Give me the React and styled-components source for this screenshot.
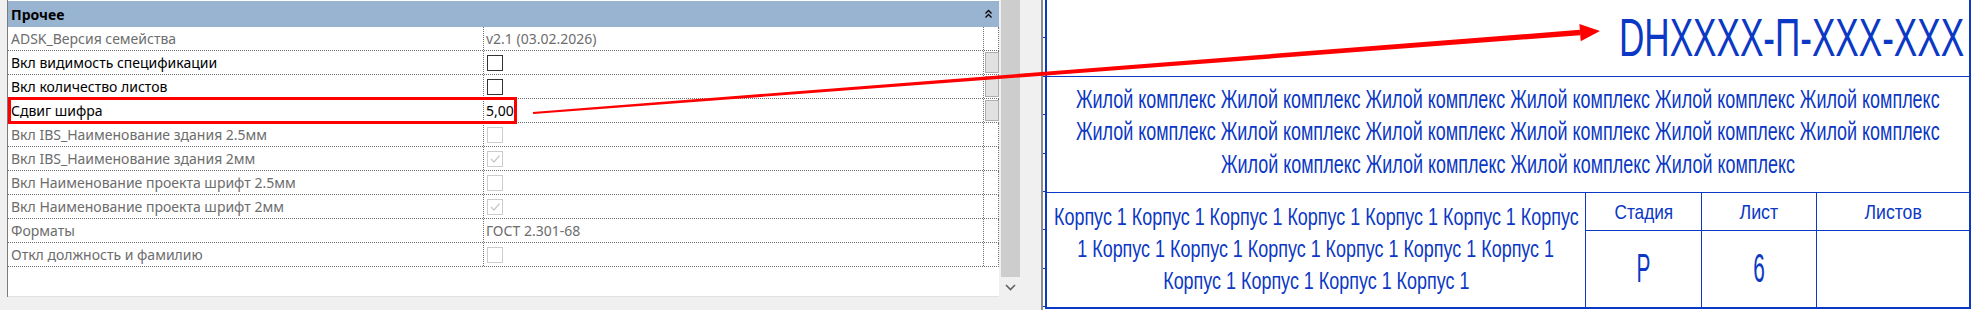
import React from 'react';
import styled, { createGlobalStyle } from 'styled-components';

const BLUE = '#0b38c4';
const DOT = '#6f6f6f';

const GlobalStyle = createGlobalStyle`
  html, body {
    margin: 0;
    padding: 0;
    background: #f0f0f0;
  }
  body {
    font-family: "Noto Sans", "Liberation Sans", sans-serif;
  }
`;

const Screen = styled.div`
  position: relative;
  width: 1971px;
  height: 310px;
  display: flex;
  overflow: hidden;
  background: #f0f0f0;
`;

/* ---------- property palette ---------- */

const PropertyPanel = styled.div`
  width: 1037px;
  flex: 0 0 1037px;
  display: flex;
  flex-direction: column;
`;

const PanelBody = styled.div`
  height: 297px;
  display: flex;
  margin-left: 7px;
  border-left: 1px solid #7c7c7c;
`;

const Grid = styled.div`
  position: relative;
  width: 991px;
  padding-top: 1px;
  background: #fff;
  box-sizing: border-box;
  border-bottom: 1px solid #e2e2e2;
`;

const GroupHeader = styled.div`
  height: 26px;
  display: flex;
  align-items: center;
  justify-content: space-between;
  padding: 0 6px 0 3px;
  background: #99b4d1;
  font-size: 14px;
  font-weight: 700;
  color: #000;
`;

const Row = styled.div`
  display: grid;
  grid-template-columns: 476px 500px 1fr;
  height: 24px;
  box-sizing: border-box;
  border-bottom: 1px dotted ${DOT};
  border-right: 1px dotted ${DOT};
  font-size: 14px;
  color: ${(p) => (p.$disabled ? '#6d6d6d' : '#000')};
`;

const LabelCell = styled.div`
  display: flex;
  align-items: center;
  padding-left: 3px;
  border-right: 1px dotted ${DOT};
  white-space: nowrap;
`;

const ValueCell = styled.div`
  display: flex;
  align-items: center;
  padding-left: 2px;
  border-right: 1px dotted ${DOT};
  white-space: nowrap;
`;

const ButtonCell = styled.div`
  padding: 1px 0 0 1px;
`;

const EditButton = styled.div`
  width: 12px;
  height: 19px;
  background: #e1e1e1;
  border: 1px solid #adadad;
`;

const CheckBox = styled.div`
  width: 14px;
  height: 14px;
  margin-left: 1px;
  border: 1px solid ${(p) => (p.$disabled ? '#cccccc' : '#333333')};
  background: #fff;
  display: flex;
  align-items: center;
  justify-content: center;
`;

const Highlight = styled.div`
  position: absolute;
  left: 0;
  top: 97px;
  width: 509px;
  height: 27px;
  box-sizing: border-box;
  border: 3px solid #ff0000;
  pointer-events: none;
`;

const ScrollBar = styled.div`
  width: 23px;
  display: flex;
  flex-direction: column;
  background: #f0f0f0;
`;

const Thumb = styled.div`
  height: 277px;
  margin: 0 2px;
  background: #cdcdcd;
`;

const ArrowBox = styled.div`
  flex: 1;
  display: flex;
  align-items: center;
  justify-content: center;
`;

const Gutter = styled.div`
  flex: 1;
`;

/* ---------- drawing view ---------- */

const DrawingView = styled.div`
  flex: 1;
  display: flex;
  background: #fff;
  border-left: 2px solid #8c8c8c;
`;

const TickColumn = styled.div`
  width: 2px;
  display: flex;
  flex-direction: column;
`;

const Tick = styled.div`
  flex: 0 0 38.4px;
  box-sizing: border-box;
  border-bottom: 1px solid ${BLUE};
`;

const Sheet = styled.div`
  width: 922px;
  height: 307px;
  display: flex;
  flex-direction: column;
  border-left: 2px solid ${BLUE};
  border-right: 2px solid ${BLUE};
  border-bottom: 2px solid ${BLUE};
`;

const CodeRow = styled.div`
  height: 77px;
  box-sizing: border-box;
  display: flex;
  align-items: center;
  padding: 0 0 3px 572px;
  overflow: hidden;
  border-bottom: 1px solid ${BLUE};
`;

const TitleRow = styled.div`
  height: 116px;
  box-sizing: border-box;
  display: flex;
  flex-direction: column;
  align-items: center;
  justify-content: center;
  padding-bottom: 6px;
  border-bottom: 1px solid ${BLUE};
`;

const StampRow = styled.div`
  flex: 1;
  display: grid;
  grid-template-columns: 538px 116px 115px 1fr;
  grid-template-rows: 38px 1fr;
`;

const StampCell = styled.div`
  display: flex;
  flex-direction: column;
  align-items: center;
  justify-content: center;
  border-left: ${(p) => (p.$first ? 'none' : `1px solid ${BLUE}`)};
  border-bottom: ${(p) => (p.$head ? `1px solid ${BLUE}` : 'none')};
  grid-row: ${(p) => p.$rows || 'auto'};
  padding-bottom: ${(p) => p.$lift || 0}px;
`;

const Narrow = styled.span`
  display: block;
  white-space: nowrap;
  font-family: "Liberation Sans", Arial, sans-serif;
  font-size: ${(p) => p.$size}px;
  line-height: ${(p) => p.$line || p.$size}px;
  transform: scaleX(${(p) => p.$scale});
  transform-origin: ${(p) => p.$origin || 'center'};
  color: ${BLUE};
`;

const Overlay = styled.svg`
  position: absolute;
  left: 0;
  top: 0;
  pointer-events: none;
`;

const rows = [
  { label: 'ADSK_Версия семейства', text: 'v2.1 (03.02.2026)', disabled: true },
  { label: 'Вкл видимость спецификации', check: false, button: true },
  { label: 'Вкл количество листов', check: false, button: true },
  { label: 'Сдвиг шифра', text: '5,00', button: true },
  { label: 'Вкл IBS_Наименование здания 2.5мм', check: false, disabled: true },
  { label: 'Вкл IBS_Наименование здания 2мм', check: true, disabled: true },
  { label: 'Вкл Наименование проекта шрифт 2.5мм', check: false, disabled: true },
  { label: 'Вкл Наименование проекта шрифт 2мм', check: true, disabled: true },
  { label: 'Форматы', text: 'ГОСТ 2.301-68', disabled: true },
  { label: 'Откл должность и фамилию', check: false, disabled: true },
];

const complexLines = [
  'Жилой комплекс Жилой комплекс Жилой комплекс Жилой комплекс Жилой комплекс Жилой комплекс',
  'Жилой комплекс Жилой комплекс Жилой комплекс Жилой комплекс Жилой комплекс Жилой комплекс',
  'Жилой комплекс Жилой комплекс Жилой комплекс Жилой комплекс',
];

const buildingLines = [
  'Корпус 1 Корпус 1 Корпус 1 Корпус 1 Корпус 1 Корпус 1 Корпус',
  '1 Корпус 1 Корпус 1 Корпус 1 Корпус 1 Корпус 1 Корпус 1',
  'Корпус 1 Корпус 1 Корпус 1 Корпус 1',
];

const CollapseIcon = () => (
  <svg width="9" height="10" viewBox="0 0 9 10">
    <polyline points="1.5,4.5 4.5,1.5 7.5,4.5" fill="none" stroke="#000" strokeWidth="1.3" />
    <polyline points="1.5,8.5 4.5,5.5 7.5,8.5" fill="none" stroke="#000" strokeWidth="1.3" />
  </svg>
);

const Check = () => (
  <svg width="12" height="12" viewBox="0 0 12 12">
    <polyline points="2,6 5,9 10.5,2.5" fill="none" stroke="#c6c6c6" strokeWidth="1.2" />
  </svg>
);

const PropertyRow = ({ row }) => (
  <Row $disabled={row.disabled}>
    <LabelCell>{row.label}</LabelCell>
    <ValueCell>
      {row.text !== undefined ? (
        row.text
      ) : (
        <CheckBox $disabled={row.disabled}>{row.check && <Check />}</CheckBox>
      )}
    </ValueCell>
    <ButtonCell>{row.button && <EditButton />}</ButtonCell>
  </Row>
);

// tapered red arrow from the highlighted row to the sheet code
const Arrow = () => (
  <Overlay width="1971" height="310" viewBox="0 0 1971 310">
    <polygon
      points="533.1,114 1580.3,35.2 1579.8,29.8 532.9,112"
      fill="#ff0000"
    />
    <polygon points="1600,31 1580.7,41.2 1579.4,23.9" fill="#ff0000" />
  </Overlay>
);

export default function App() {
  return (
    <>
      <GlobalStyle />
      <Screen>
        <PropertyPanel>
          <PanelBody>
            <Grid>
              <GroupHeader>
                <span>Прочее</span>
                <CollapseIcon />
              </GroupHeader>
              {rows.map((row) => (
                <PropertyRow key={row.label} row={row} />
              ))}
              <Highlight />
            </Grid>
            <ScrollBar>
              <Thumb />
              <ArrowBox>
                <svg width="11" height="7" viewBox="0 0 11 7">
                  <polyline points="1,1 5.5,5.5 10,1" fill="none" stroke="#606060" strokeWidth="1.6" />
                </svg>
              </ArrowBox>
            </ScrollBar>
          </PanelBody>
        </PropertyPanel>
        <Gutter />
        <DrawingView>
          <TickColumn>
            {Array.from({ length: 8 }).map((_, i) => (
              <Tick key={i} />
            ))}
          </TickColumn>
          <Sheet>
            <CodeRow>
              <Narrow $size={54} $scale={0.65} $origin="left">
                DHXXXX-П-XXX-XXX
              </Narrow>
            </CodeRow>
            <TitleRow>
              {complexLines.map((line, i) => (
                <Narrow key={i} $size={26} $line={32.5} $scale={0.69}>
                  {line}
                </Narrow>
              ))}
            </TitleRow>
            <StampRow>
              <StampCell $first $rows="1 / 3">
                {buildingLines.map((line, i) => (
                  <Narrow key={i} $size={23} $line={31.7} $scale={0.78}>
                    {line}
                  </Narrow>
                ))}
              </StampCell>
              <StampCell $head>
                <Narrow $size={21} $scale={0.82}>Стадия</Narrow>
              </StampCell>
              <StampCell $head>
                <Narrow $size={21} $scale={0.85}>Лист</Narrow>
              </StampCell>
              <StampCell $head>
                <Narrow $size={21} $scale={0.84}>Листов</Narrow>
              </StampCell>
              <StampCell $lift={3}>
                <Narrow $size={40} $scale={0.52}>Р</Narrow>
              </StampCell>
              <StampCell $lift={3}>
                <Narrow $size={40} $scale={0.52}>6</Narrow>
              </StampCell>
              <StampCell />
            </StampRow>
          </Sheet>
        </DrawingView>
        <Arrow />
      </Screen>
    </>
  );
}
